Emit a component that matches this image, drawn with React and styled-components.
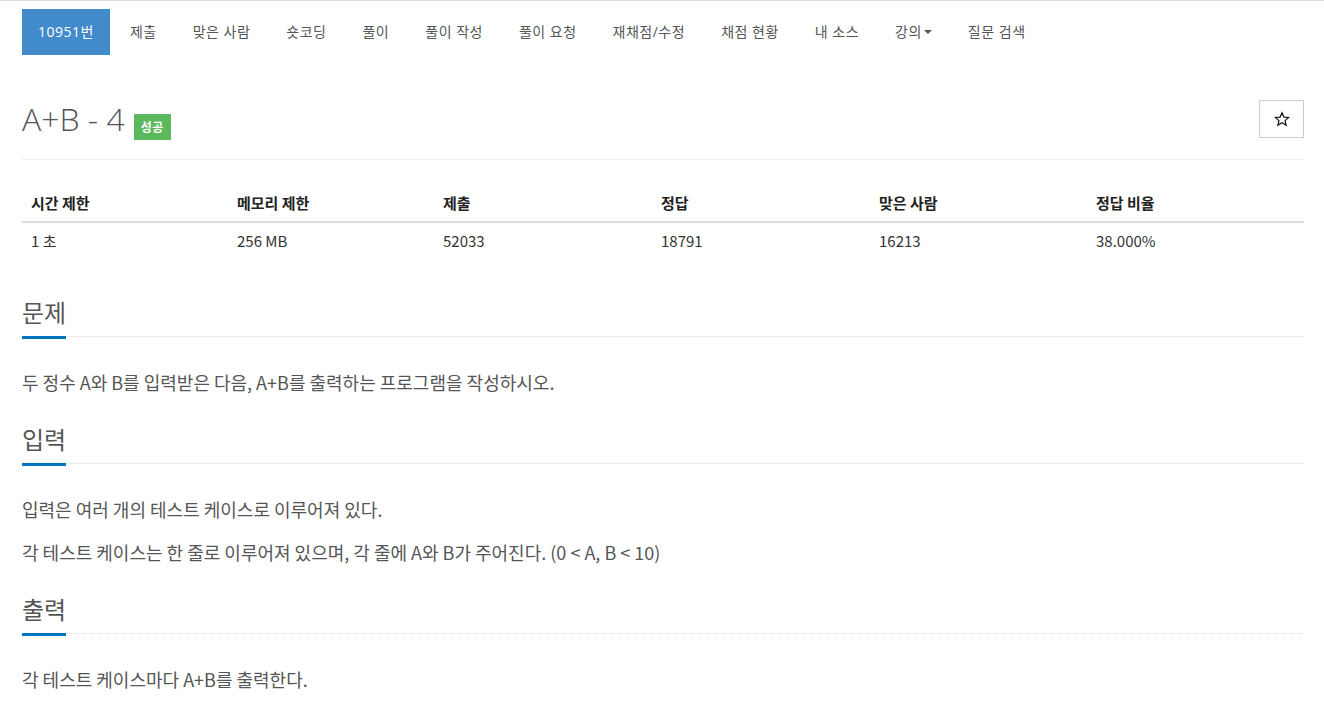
import React from "react";
import styled, { createGlobalStyle } from "styled-components";

const GlobalStyle = createGlobalStyle`
  html, body {
    margin: 0;
    padding: 0;
    background: #fff;
  }
  body {
    font-family: "Open Sans", "Noto Sans CJK KR", sans-serif;
    font-size: 14px;
    color: #333;
  }
`;

const tabs = [
  "제출",
  "맞은 사람",
  "숏코딩",
  "풀이",
  "풀이 작성",
  "풀이 요청",
  "재채점/수정",
  "채점 현황",
  "내 소스",
  "강의",
  "질문 검색",
];

const stats = [
  { head: "시간 제한", value: "1 초", width: 206 },
  { head: "메모리 제한", value: "256 MB", width: 206 },
  { head: "제출", value: "52033", width: 218 },
  { head: "정답", value: "18791", width: 218 },
  { head: "맞은 사람", value: "16213", width: 217 },
  { head: "정답 비율", value: "38.000%" },
];

const sections = [
  {
    title: "문제",
    body: ["두 정수 A와 B를 입력받은 다음, A+B를 출력하는 프로그램을 작성하시오."],
  },
  {
    title: "입력",
    body: [
      "입력은 여러 개의 테스트 케이스로 이루어져 있다.",
      "각 테스트 케이스는 한 줄로 이루어져 있으며, 각 줄에 A와 B가 주어진다. (0 < A, B < 10)",
    ],
  },
  {
    title: "출력",
    body: ["각 테스트 케이스마다 A+B를 출력한다."],
  },
];

function StarIcon() {
  return (
    <svg width="16" height="16" viewBox="0 0 24 24" fill="none">
      <path
        d="M12 2.5l2.9 6.6 7.1.6-5.4 4.7 1.6 7-6.2-3.7-6.2 3.7 1.6-7L2 9.7l7.1-.6z"
        stroke="#111"
        strokeWidth="1.8"
        strokeLinejoin="miter"
      />
    </svg>
  );
}

export default function App() {
  return (
    <Page>
      <GlobalStyle />
      <Container>
        <Tabs>
          <Tab $active>10951번</Tab>
          {tabs.map((t) => (
            <Tab key={t}>
              {t}
              {t === "강의" && <Caret />}
            </Tab>
          ))}
        </Tabs>

        <PageHeader>
          <Title>
            A+B - 4 <Label>성공</Label>
          </Title>
          <StarButton>
            <StarIcon />
          </StarButton>
        </PageHeader>

        <StatTable>
          <thead>
            <tr>
              {stats.map((s) => (
                <th key={s.head} style={s.width ? { width: s.width } : undefined}>
                  {s.head}
                </th>
              ))}
            </tr>
          </thead>
          <tbody>
            <tr>
              {stats.map((s) => (
                <td key={s.head}>{s.value}</td>
              ))}
            </tr>
          </tbody>
        </StatTable>

        {sections.map((sec) => (
          <Section key={sec.title}>
            <Headline>
              <h2>{sec.title}</h2>
            </Headline>
            {sec.body.map((p) => (
              <Text key={p}>{p}</Text>
            ))}
          </Section>
        ))}
      </Container>
    </Page>
  );
}

const Page = styled.div`
  border-top: 1px solid #ddd;
  min-height: 719px;
`;

const Container = styled.div`
  padding: 0 20px 0 22px;
`;

const Tabs = styled.ul`
  display: flex;
  gap: 4px;
  list-style: none;
  margin: 8px 0 0;
  padding: 0;
`;

const Tab = styled.li`
  display: flex;
  align-items: center;
  height: 46px;
  padding: 0 16px;
  box-sizing: border-box;
  font-size: 14px;
  line-height: 20px;
  letter-spacing: 0.5px;
  color: ${(p) => (p.$active ? "#fff" : "#555")};
  background: ${(p) => (p.$active ? "#428bca" : "transparent")};
`;

const Caret = styled.span`
  display: inline-block;
  width: 0;
  height: 0;
  margin-left: 2px;
  border-top: 4px solid #555;
  border-left: 4px solid transparent;
  border-right: 4px solid transparent;
`;

const PageHeader = styled.div`
  display: flex;
  justify-content: space-between;
  align-items: flex-start;
  margin-top: 44px;
  padding-bottom: 20px;
  border-bottom: 1px solid #eee;
`;

const Title = styled.h1`
  margin: 0;
  height: 40px;
  font-size: 32px;
  line-height: 40px;
  font-weight: 300;
  color: #555;
  display: flex;
  align-items: flex-end;
  gap: 9px;
`;

const Label = styled.span`
  display: inline-block;
  margin-bottom: -1px;
  padding: 0 7px;
  height: 26px;
  line-height: 26px;
  font-family: "Noto Sans CJK KR", sans-serif;
  font-size: 12px;
  font-weight: 700;
  letter-spacing: 0.5px;
  color: #fff;
  background: #5cb85c;
`;

const StarButton = styled.button`
  display: flex;
  align-items: center;
  justify-content: center;
  width: 45px;
  height: 38px;
  margin-top: 1px;
  border: 1px solid #ccc;
  background: #fff;
  padding: 0;
`;

const StatTable = styled.table`
  width: 100%;
  border-collapse: collapse;
  table-layout: fixed;
  margin: 25px 0 40px;
  font-family: "Noto Sans CJK KR", sans-serif;
  font-size: 15px;
  color: #333;
  th,
  td {
    box-sizing: border-box;
    text-align: left;
    padding: 8px 9px;
    line-height: 20px;
  }
  th {
    font-weight: 700;
    color: #222;
    border-bottom: 2px solid #ddd;
  }
`;

const Section = styled.section`
  margin-bottom: 32px;
`;

const Headline = styled.div`
  display: flex;
  border-bottom: 1px dotted #ddd;
  margin-bottom: 33px;
  h2 {
    margin: 0 0 -3px;
    padding-bottom: 11px;
    font-family: "Noto Sans CJK KR", sans-serif;
    font-size: 24px;
    line-height: 26px;
    font-weight: 400;
    color: #555;
    border-bottom: 3px solid #0076c0;
  }
`;

const Text = styled.p`
  margin: 0 0 19px;
  font-family: "Noto Sans CJK KR", sans-serif;
  font-size: 18px;
  line-height: 24px;
  color: #555;
`;
